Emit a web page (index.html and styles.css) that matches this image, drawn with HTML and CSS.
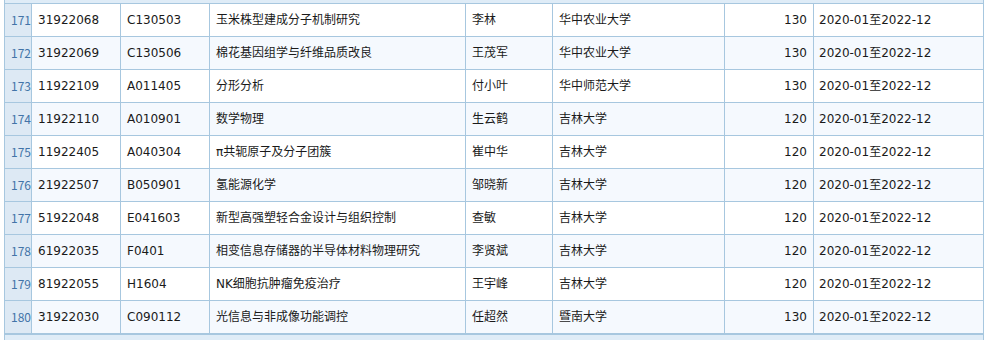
FILE: index.html
```html
<!DOCTYPE html>
<html lang="zh-CN">
<head>
<meta charset="utf-8">
<link rel="stylesheet" href="styles.css">
</head>
<body>
<div class="panel">
  <div class="head-tail"></div>
  <div class="grid">
    <div class="row"><div class="c num">171</div><div class="c">31922068</div><div class="c">C130503</div><div class="c">玉米株型建成分子机制研究</div><div class="c">李林</div><div class="c">华中农业大学</div><div class="c amt">130</div><div class="c">2020-01至2022-12</div></div>
    <div class="row alt"><div class="c num">172</div><div class="c">31922069</div><div class="c">C130506</div><div class="c">棉花基因组学与纤维品质改良</div><div class="c">王茂军</div><div class="c">华中农业大学</div><div class="c amt">130</div><div class="c">2020-01至2022-12</div></div>
    <div class="row"><div class="c num">173</div><div class="c">11922109</div><div class="c">A011405</div><div class="c">分形分析</div><div class="c">付小叶</div><div class="c">华中师范大学</div><div class="c amt">130</div><div class="c">2020-01至2022-12</div></div>
    <div class="row alt"><div class="c num">174</div><div class="c">11922110</div><div class="c">A010901</div><div class="c">数学物理</div><div class="c">生云鹤</div><div class="c">吉林大学</div><div class="c amt">120</div><div class="c">2020-01至2022-12</div></div>
    <div class="row"><div class="c num">175</div><div class="c">11922405</div><div class="c">A040304</div><div class="c">π共轭原子及分子团簇</div><div class="c">崔中华</div><div class="c">吉林大学</div><div class="c amt">120</div><div class="c">2020-01至2022-12</div></div>
    <div class="row alt"><div class="c num">176</div><div class="c">21922507</div><div class="c">B050901</div><div class="c">氢能源化学</div><div class="c">邹晓新</div><div class="c">吉林大学</div><div class="c amt">120</div><div class="c">2020-01至2022-12</div></div>
    <div class="row"><div class="c num">177</div><div class="c">51922048</div><div class="c">E041603</div><div class="c">新型高强塑轻合金设计与组织控制</div><div class="c">查敏</div><div class="c">吉林大学</div><div class="c amt">120</div><div class="c">2020-01至2022-12</div></div>
    <div class="row alt"><div class="c num">178</div><div class="c">61922035</div><div class="c">F0401</div><div class="c">相变信息存储器的半导体材料物理研究</div><div class="c">李贤斌</div><div class="c">吉林大学</div><div class="c amt">120</div><div class="c">2020-01至2022-12</div></div>
    <div class="row"><div class="c num">179</div><div class="c">81922055</div><div class="c">H1604</div><div class="c">NK细胞抗肿瘤免疫治疗</div><div class="c">王宇峰</div><div class="c">吉林大学</div><div class="c amt">120</div><div class="c">2020-01至2022-12</div></div>
    <div class="row alt"><div class="c num">180</div><div class="c">31922030</div><div class="c">C090112</div><div class="c">光信息与非成像功能调控</div><div class="c">任超然</div><div class="c">暨南大学</div><div class="c amt">130</div><div class="c">2020-01至2022-12</div></div>
  </div>
  <div class="foot"></div>
</div>
</body>
</html>
```
FILE: styles.css
```css
* { box-sizing: border-box; }
html, body { margin: 0; padding: 0; background: #ffffff; }
body {
  font-family: "DejaVu Sans", "Noto Sans CJK SC", sans-serif;
  font-size: 12px;
  color: #1a1a1a;
}
.panel {
  margin-left: 4px;
  width: 980px;
  height: 340px;
  background: #dfecf7;
  border-left: 1px solid #a7c7df;
  border-right: 1px solid #a7c7df;
}
.head-tail { height: 3px; background: #dfecf7; }
.grid { border-top: 1px solid #a7c7df; }
.row {
  display: grid;
  grid-template-columns: 27px 89px 89px 256px 87px 172px 89px 169px;
  height: 33px;
  background: #ffffff;
}
.row.alt { background: #f5f9fe; }
.c {
  border-right: 1px solid #a7c7df;
  border-bottom: 1px solid #a7c7df;
  padding: 0 5px 0 6px;
  display: flex;
  align-items: center;
  white-space: nowrap;
  overflow: hidden;
  line-height: 16px;
}
.c:last-child { border-right: none; padding-left: 5px; }
.c.num {
  font-family: "Noto Sans CJK SC", "Noto Sans", sans-serif;
  background: #dde9f4;
  color: #4274a8;
  padding-left: 6px;
  padding-right: 0;
}
.c.amt { justify-content: flex-end; padding-right: 6px; }
.foot { border-top: 1px solid #a7c7df; height: 6px; background: #dfecf7; }
```
